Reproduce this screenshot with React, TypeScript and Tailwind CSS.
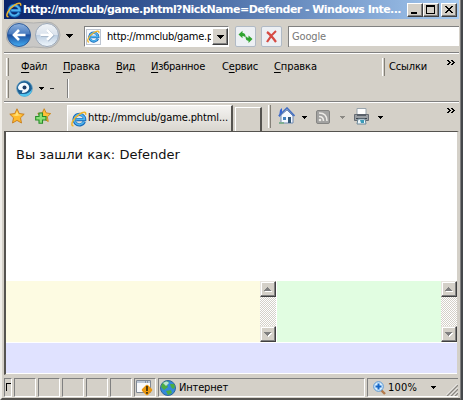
import { useLayoutEffect, useRef } from "react";
import type { ReactNode } from "react";

/* Spreads its letters so that the label takes exactly `width` pixels. */
function Label({ width, className = "", children }: { width: number; className?: string; children: ReactNode }) {
  const ref = useRef<HTMLSpanElement>(null);
  useLayoutEffect(() => {
    const el = ref.current;
    if (!el) return;
    el.style.letterSpacing = "0px";
    const natural = el.getBoundingClientRect().width;
    const count = (el.textContent ?? "").length;
    el.style.letterSpacing = `${(width - natural) / count}px`;
  }, [width]);
  return (
    <span ref={ref} className={`shrink-0 whitespace-nowrap ${className}`}>
      {children}
    </span>
  );
}

function IeLogo({ size }: { size: number }) {
  return (
    <svg width={size} height={size} viewBox="0 0 16 16" className="shrink-0">
      <path d="M13.300 10.700A5.300 5.300 0 1 1 13.700 8.700H5.200" fill="none" stroke="#1769b8" strokeWidth="3.200" />
      <path d="M13 10.700A5.100 5.100 0 1 1 13.500 8.300H5.200" fill="none" stroke="#4fb4ee" strokeWidth="1.700" />
      <path d="M2.500 14.800C-1.500 15 2.400 6.800 8.200 3.400C12 .8 15.600 .3 14.500 3.800" fill="none" stroke="#f0b429" strokeWidth="1.500" />
    </svg>
  );
}

function Caret({ className = "text-black" }: { className?: string }) {
  return (
    <svg width="5" height="3" viewBox="0 0 5 3" shapeRendering="crispEdges" className={`shrink-0 ${className}`}>
      <path d="M0 0H5V1H4V2H3V3H2V2H1V1H0Z" fill="currentColor" />
    </svg>
  );
}

function WideCaret({ className = "" }: { className?: string }) {
  return (
    <svg width="7" height="4" viewBox="0 0 7 4" shapeRendering="crispEdges" className={`shrink-0 ${className}`}>
      <path d="M0 0H7V1H6V2H5V3H4V4H3V3H2V2H1V1H0Z" fill="#000" />
    </svg>
  );
}

function Chevrons() {
  return (
    <svg width="8" height="5" viewBox="0 0 8 5" shapeRendering="crispEdges" className="shrink-0">
      <path d="M0 0h2v1h1v1h1v1H3v1H2v1H0V4h1V3h1V2H1V1H0ZM4 0h2v1h1v1h1v1H7v1H6v1H4V4h1V3h1V2H5V1H4Z" fill="#000" />
    </svg>
  );
}

function Grip({ className = "" }: { className?: string }) {
  return <div className={`w-[3px] shrink-0 border-l border-r border-l-white border-r-[#848078] bg-[#d4d0c8] ${className}`} />;
}

function WinButton({ children, className = "" }: { children: ReactNode; className?: string }) {
  return (
    <div className={`h-[14px] w-4 shrink-0 border border-t-white border-l-white border-r-[#404040] border-b-[#404040] bg-[#d4d0c8] shadow-[inset_-1px_-1px_0_#808080] ${className}`}>
      <svg width="14" height="12" viewBox="0 0 14 12" shapeRendering="crispEdges">{children}</svg>
    </div>
  );
}

function TitleBar() {
  return (
    <div className="ml-1 mr-px flex h-[19px] shrink-0 items-center bg-linear-to-r from-[#0a246a] to-[#a6caf0] pl-[2px] pr-[2px]">
      <IeLogo size={16} />
      <Label width={378} className="ml-px font-[Verdana,'DejaVu_Sans',sans-serif] text-[11px] font-bold leading-[19px] text-white">
        http://mmclub/game.phtml?NickName=Defender - Windows Inte...
      </Label>
      <div className="ml-auto flex">
        <WinButton><path d="M3 8h6v2H3Z" fill="#000" /></WinButton>
        <WinButton><path d="M2 1h9v9H2ZM3 3v6h7V3Z" fill="#000" fillRule="evenodd" /></WinButton>
        <WinButton className="ml-[2px]">
          <path d="M3 2h2v1h1v1h2V3h1V2h2v1h-1v1H9v1H8v1h1v1h1v1h1v1H9V8H8V7H6v1H5v1H3V8h1V7h1V6h1V5H5V4H4V3H3Z" fill="#000" />
        </WinButton>
      </div>
    </div>
  );
}

function TravelButtons() {
  return (
    <svg width="56" height="28" viewBox="0 0 56 28" className="shrink-0">
      <defs>
        <linearGradient id="back" x1="0" y1="0" x2="0" y2="1">
          <stop offset="0" stopColor="#8fb2de" />
          <stop offset=".45" stopColor="#4a7cc0" />
          <stop offset=".5" stopColor="#1c4f9f" />
          <stop offset="1" stopColor="#45adf3" />
        </linearGradient>
        <linearGradient id="fwd" x1="0" y1="0" x2="0" y2="1">
          <stop offset="0" stopColor="#f1f4f8" />
          <stop offset=".48" stopColor="#dbe3ed" />
          <stop offset=".52" stopColor="#becfe1" />
          <stop offset="1" stopColor="#f1f8fe" />
        </linearGradient>
      </defs>
      <path d="M13 1Q28 3 41 1A13 13 0 0 1 41 27Q28 25 13 27A13 13 0 0 1 13 1Z" fill="#c9c8c6" stroke="#b0b0af" />
      <circle cx="13" cy="14" r="11.500" fill="url(#back)" stroke="#305c99" />
      <path d="M19.500 14H8.500M13 9L8 14L13 19" fill="none" stroke="#fff" strokeWidth="2.600" />
      <circle cx="41" cy="14" r="11.500" fill="url(#fwd)" stroke="#9ba8b8" />
      <path d="M35 14.500H46M41.500 9.500L46.500 14.500L41.500 19.500" fill="none" stroke="#8ea3bb" strokeWidth="2.800" />
      <path d="M34.500 14H45.500M41 9L46 14L41 19" fill="none" stroke="#fff" strokeWidth="2.600" />
    </svg>
  );
}

function NavBar() {
  return (
    <div className="flex h-[33px] shrink-0 items-center pb-px pl-[6px] pr-px">
      <TravelButtons />
      <WideCaret className="ml-[4px] mt-[2px]" />
      <div className="ml-[11px] mt-[3px] flex h-[21px] w-[145px] items-center border border-[#808080] border-r-white border-b-white bg-white pl-px">
        <div className="flex h-4 w-[15px] items-center justify-center border border-[#bdc5d1] bg-[#f7f9fc]">
          <IeLogo size={13} />
        </div>
        <div className="ml-[6px] flex w-[104px] overflow-hidden leading-4">
          <Label width={106} className="text-[11px]">http://mmclub/game.p</Label>
        </div>
        <div className="ml-auto flex h-[17px] w-4 items-center justify-center border border-t-white border-l-white border-r-[#404040] border-b-[#404040] bg-[#d4d0c8] shadow-[inset_-1px_-1px_0_#808080]">
          <WideCaret />
        </div>
      </div>
      <div className="ml-[6px] mt-[3px] flex h-[21px] w-[21px] items-center justify-center rounded-[2px] border border-[#b1bac5] bg-[#edf0f4]">
        <svg width="15" height="14" viewBox="0 0 15 14" className="shrink-0">
          <path d="M.5 4.500L4.500 .8V3Q8 3 7.500 7.500Q6.500 5.800 4.500 6V8.300Z" fill="#2fa32f" />
          <path d="M14.500 9L10.500 13V10.800Q7 10.500 7.800 6Q9 8 10.500 7.800V5.500Z" fill="#2fa32f" />
        </svg>
      </div>
      <div className="ml-[5px] mt-[3px] flex h-[21px] w-[21px] items-center justify-center rounded-[2px] border border-[#b1bac5] bg-[#edf0f4]">
        <svg width="13" height="13" viewBox="0 0 13 13">
          <path d="M2 2Q6 5 11 12M11 1Q6 5 2 12" fill="none" stroke="#d64a43" strokeWidth="2.200" />
        </svg>
      </div>
      <div className="ml-[6px] mt-[3px] flex h-[21px] flex-1 items-center border-t border-l border-[#808080] bg-white pl-[3px] shadow-[inset_0_-1px_0_#d4d0c8]">
        <Label width={34} className="text-[11px] text-[#777]">Google</Label>
      </div>
    </div>
  );
}

const menus = [
  { first: "", key: "Ф", rest: "айл", width: 26, gap: "ml-[12px]" },
  { first: "", key: "П", rest: "равка", width: 37, gap: "ml-[16px]" },
  { first: "", key: "В", rest: "ид", width: 19, gap: "ml-[16px]" },
  { first: "", key: "И", rest: "збранное", width: 54, gap: "ml-[16px]" },
  { first: "С", key: "е", rest: "рвис", width: 36, gap: "ml-[17px]" },
  { first: "", key: "С", rest: "правка", width: 43, gap: "ml-[16px]" },
];

function MenuBars() {
  return (
    <div className="ml-1 mr-px h-[49px] shrink-0 border-t border-[#808080]">
      <div className="flex h-[24px] items-center border-t border-white pr-[4px]">
        <Grip className="ml-[2px] mt-[3px] h-[18px]" />
        <div className="flex pt-[2px]">
          {menus.map((m) => (
            <Label key={m.key + m.rest} width={m.width} className={`text-[11px] leading-4 ${m.gap}`}>
              {m.first}<span className="underline underline-offset-2">{m.key}</span>{m.rest}
            </Label>
          ))}
        </div>
        <Grip className="ml-auto mt-[3px] h-[18px]" />
        <div className="ml-[4px] flex pt-[2px]"><Label width={38} className="text-[11px] leading-4">Ссылки</Label></div>
        <div className="-mt-[6px] ml-[20px]"><Chevrons /></div>
      </div>
      <div className="flex h-[23px] items-center">
        <Grip className="ml-[2px] h-[18px]" />
        <svg width="17" height="17" viewBox="0 0 17 17" className="ml-[7px] shrink-0">
          <circle cx="8.500" cy="8.500" r="7.800" fill="#1d5f93" stroke="#5a9cc4" strokeWidth=".8" />
          <path d="M3 14A7.500 7.500 0 0 0 16 9Q13 14 8 14Z" fill="#4fc3ed" />
          <path d="M2 7Q4 2 10 3Q14 5 13 9Q11 13 6 13L6.500 10Q2 11 2 7Z" fill="#f4faff" />
          <circle cx="8.500" cy="7.500" r="2" fill="#1d3c66" />
        </svg>
        <Caret className="ml-[6px] text-black" />
        <div className="ml-[6px] h-px w-[4px] bg-[#222]" />
        <div className="ml-[13px] h-[19px] w-[2px] border-l border-r border-l-[#808080] border-r-white" />
      </div>
    </div>
  );
}

const starPath = "M8 .8L10.200 5.500L15.200 6.200L11.500 9.800L12.500 15L8 12.400L3.500 15L4.500 9.800L.8 6.200L5.800 5.500Z";

function TabBar() {
  return (
    <div className="ml-1 mr-px flex h-[30px] shrink-0 border-t border-[#808080]">
      <div className="flex min-w-0 flex-1 border-t border-white">
        <svg width="16" height="16" viewBox="0 0 16 16" className="ml-[5px] mt-[5px] shrink-0">
          <path d={starPath} fill="#ffba2c" stroke="#c77a19" strokeWidth=".9" />
          <path d="M8 3L9.500 6.500L13 7L7 8L3 7L6.500 6.500Z" fill="#ffe279" />
        </svg>
        <svg width="17" height="16" viewBox="0 0 17 16" className="ml-[10px] mt-[5px] shrink-0">
          <g transform="translate(2 0) scale(.9)"><path d={starPath} fill="#ffc13a" stroke="#c98318" /></g>
          <path d="M4 5H7.500V8.500H11V12H7.500V15.300H4V12H.7V8.500H4Z" fill="#8be077" stroke="#268d28" strokeWidth="1.100" />
        </svg>
        <div className="ml-[15px] mt-[2px] flex h-[26px] w-[166px] shrink-0 items-center border-t border-l border-r-2 border-t-white border-l-white border-r-[#55534f] bg-linear-to-b from-[#f4f3f1] to-[#d9d6cf] pl-[3px]">
          <IeLogo size={16} />
          <Label width={140} className="ml-px text-[11px]">http://mmclub/game.phtml...</Label>
        </div>
        <div className="ml-[2px] mt-[4px] h-[24px] w-[27px] shrink-0 border-t border-l border-r-2 border-t-white border-l-white border-r-[#55534f]" />
        <Grip className="ml-[6px] mt-[2px] h-[23px]" />
        <svg width="17" height="18" viewBox="0 0 17 18" className="ml-[7px] mt-[4px] shrink-0">
          <path d="M2 3L4 1V8L1 10Z" fill="#3563d6" />
          <path d="M3 8L9 3L15 9V16H3Z" fill="#f5f8ff" stroke="#6f8ab3" />
          <path d="M.7 9L9 1L16.500 9" fill="none" stroke="#426ec2" strokeWidth="1.600" />
          <path d="M5 10H8V13H5Z" fill="#407fbd" /><path d="M10 10H13V16H10Z" fill="#315779" />
          <path d="M1 15H6V17H1Z" fill="#7fae91" />
        </svg>
        <div className="ml-[7px] mt-[13px]"><Caret /></div>
        <svg width="14" height="14" viewBox="0 0 14 14" className="ml-[9px] mt-[7px] shrink-0">
          <rect x=".5" y=".5" width="13" height="13" rx="1.500" fill="#a2a2a1" stroke="#858583" />
          <path d="M3 3Q11 3 11 11M3 6.500Q7.500 6.500 7.500 11" fill="none" stroke="#eceae6" strokeWidth="1.600" />
          <circle cx="4" cy="10" r="1.300" fill="#eceae6" />
        </svg>
        <div className="ml-[10px] mt-[13px]"><Caret className="text-[#8b8984]" /></div>
        <svg width="17" height="17" viewBox="0 0 17 17" className="ml-[8px] mt-[5px] shrink-0">
          <path d="M4 .5H13V8H4Z" fill="#fff" stroke="#98a4ad" />
          <path d="M1.500 6.500H15.500V12.500H1.500Z" fill="#9a9fa4" stroke="#666c73" />
          <path d="M4 6H13V8H4Z" fill="#59616a" />
          <path d="M3 10H14V11H3Z" fill="#3c444d" />
          <path d="M5 11H12L13 16H4Z" fill="#edf8fc" stroke="#6c8797" />
          <path d="M7 12H11V15H8Z" fill="#3a9bb8" />
        </svg>
        <div className="ml-[8px] mt-[13px]"><Caret /></div>
        <div className="ml-auto mr-[4px] mt-[5px]"><Chevrons /></div>
      </div>
    </div>
  );
}

function ScrollButton({ down = false }: { down?: boolean }) {
  return (
    <div className="flex h-4 w-4 items-center justify-center border border-t-[#e8e5df] border-l-[#e8e5df] border-r-[#404040] border-b-[#404040] bg-[#d4d0c8] shadow-[inset_-1px_-1px_0_#808080,inset_1px_1px_0_#fff]">
      <svg width="8" height="5" viewBox="0 0 8 5" shapeRendering="crispEdges">
        {down ? (
          <>
            <path d="M1 1H8V2H7V3H6V4H5V5H4V4H3V3H2V2H1Z" fill="#fff" />
            <path d="M0 0H7V1H6V2H5V3H4V4H3V3H2V2H1V1H0Z" fill="#808080" />
          </>
        ) : (
          <>
            <path d="M1 4H8V5H1Z" fill="#fff" />
            <path d="M3 0H4V1H5V2H6V3H7V4H0V3H1V2H2V1H3Z" fill="#808080" />
          </>
        )}
      </svg>
    </div>
  );
}

function ScrollBar() {
  return (
    <div className="flex w-4 shrink-0 flex-col justify-between bg-[conic-gradient(#fff_25%,#d4d0c8_0_50%,#fff_0_75%,#d4d0c8_0)] bg-size-[2px_2px]">
      <ScrollButton />
      <ScrollButton down />
    </div>
  );
}

function Page() {
  return (
    <div className="ml-1 mr-px flex h-[244px] shrink-0 flex-col border-t border-l-2 border-r-2 border-b border-t-[#55534f] border-l-[#55534f] border-r-[#d4d0c8] border-b-[#d4d0c8] bg-white">
      <div className="flex h-[149px] shrink-0 pl-[10px] pt-[15px]">
        <Label width={164} className="font-[Verdana,'DejaVu_Sans',sans-serif] text-[13px] leading-4 text-[#111]">Вы зашли как: Defender</Label>
      </div>
      <div className="flex h-[61px] shrink-0">
        <div className="w-[254px] bg-[#fdfbe2]" />
        <ScrollBar />
        <div className="ml-px flex-1 bg-[#e1fde1]" />
        <ScrollBar />
      </div>
      <div className="mt-px h-[30px] bg-[#e0e2ff]" />
    </div>
  );
}

function Pane({ className = "", children }: { className?: string; children?: ReactNode }) {
  return (
    <div className={`flex h-[19px] shrink-0 items-center border border-t-[#808080] border-l-[#808080] border-r-white border-b-white ${className}`}>
      {children}
    </div>
  );
}

function StatusBar() {
  return (
    <div className="ml-1 mr-[2px] flex h-[22px] shrink-0 gap-[2px] pt-[3px]">
      <Pane className="w-[8px]">
        <svg width="6" height="9" viewBox="0 0 6 9" shapeRendering="crispEdges"><path d="M1 0H6V1H2V8H1Z" fill="#000" /></svg>
      </Pane>
      {[0, 1, 2, 3, 4].map((i) => <Pane key={i} className="w-[22px]" />)}
      <Pane className="w-[22px]">
        <svg width="19" height="17" viewBox="0 0 19 17" className="shrink-0">
          <path d="M1.500 1.500H15.500V13.500H1.500Z" fill="#f8f9fb" stroke="#808995" />
          <path d="M2 2H15V4H2Z" fill="#bcc7d6" /><path d="M10 3H11M12 3H13" stroke="#53647f" />
          <path d="M12 7L16 11L12 15L8 11Z" fill="#f5a315" stroke="#e8960f" strokeLinejoin="round" strokeWidth="2.500" />
          <path d="M11.200 7H12.800V12H11.200ZM11.200 13H12.800V14.700H11.200Z" fill="#292312" />
        </svg>
      </Pane>
      <Pane className="flex-1">
        <svg width="16" height="16" viewBox="0 0 16 16" className="ml-px shrink-0">
          <circle cx="8" cy="8" r="7.500" fill="#3489db" stroke="#316699" />
          <path d="M2 4Q5 0 9 2L7 5L8 7L4 10L1 7ZM10 4L14 4Q16 8 13 9L11 7ZM6 11L11 10L12 13L8 15Z" fill="#4dad42" />
          <path d="M3 3Q7 0 9 3L6 6Z" fill="#bce5d2" />
        </svg>
        <Label width={49} className="ml-[3px] text-[11px] leading-4">Интернет</Label>
      </Pane>
      <Pane className="w-[91px] border-r-0">
        <svg width="13" height="14" viewBox="0 0 13 14" className="ml-[5px] shrink-0">
          <path d="M8 9L12 13" stroke="#b47a4b" strokeWidth="2.400" />
          <circle cx="5.500" cy="5.500" r="4.800" fill="#d5edff" stroke="#5796d3" />
          <path d="M5.500 2.500V8.500M2.500 5.500H8.500" stroke="#1466c6" strokeWidth="2" />
        </svg>
        <Label width={29} className="ml-[2px] text-[11px] leading-4">100%</Label>
        <Caret className="ml-[14px] text-black" />
        <svg width="12" height="12" viewBox="0 0 12 12" className="ml-auto mt-[5px] shrink-0">
          <path d="M1 12L12 1M5 12L12 5M9 12L12 9" stroke="#8b8882" strokeWidth="1.500" />
          <path d="M0 11.500L11.500 0M4 11.500L12 3.500M8 11.500L12 7.500" stroke="#fff" strokeWidth=".8" />
        </svg>
      </Pane>
    </div>
  );
}

export default function App() {
  return (
    <div className="flex h-[400px] w-[463px] overflow-hidden bg-[#d4d0c8] font-[Tahoma,'DejaVu_Sans_Condensed','DejaVu_Sans',sans-serif] text-black">
      <div className="flex w-[461px] shrink-0 flex-col border-b-2 border-l-2 border-r border-b-[#55534f] border-l-[#f0eee9] border-r-[#808080]">
        <div className="-ml-[2px] flex flex-1 flex-col">
          <TitleBar />
          <NavBar />
          <MenuBars />
          <TabBar />
          <Page />
          <StatusBar />
        </div>
      </div>
      <div className="flex-1 bg-[#45484b]" />
    </div>
  );
}
